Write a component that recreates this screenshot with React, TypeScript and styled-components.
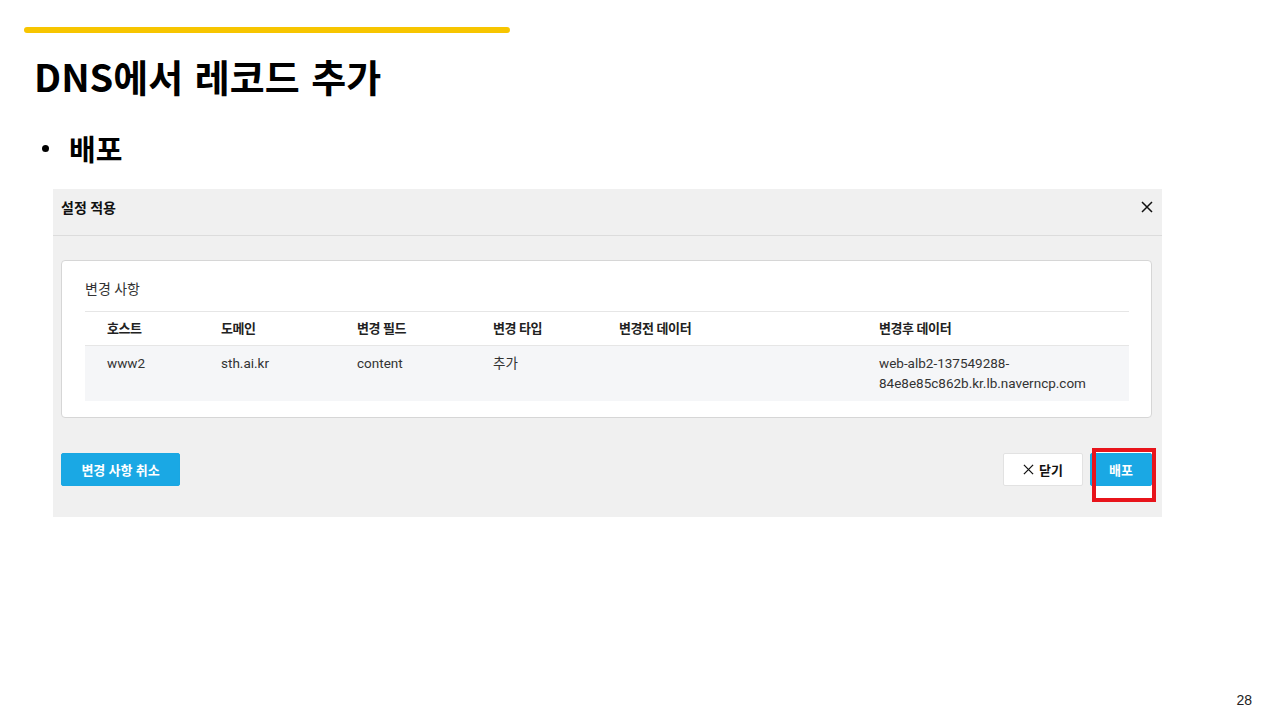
import React from "react";
import styled, { createGlobalStyle } from "styled-components";

const GlobalStyle = createGlobalStyle`
  html, body {
    margin: 0;
    padding: 0;
    background: #ffffff;
  }
`;

const Slide = styled.div`
  width: 1280px;
  height: 720px;
  box-sizing: border-box;
  display: flex;
  flex-direction: column;
  padding: 27px 0 0 0;
  background: #ffffff;
  font-family: "Noto Sans CJK KR", "Noto Sans", sans-serif;
  color: #000;
  overflow: hidden;
`;

const AccentBar = styled.div`
  width: 486px;
  height: 6px;
  margin-left: 24px;
  border-radius: 3px;
  background: #f7c500;
`;

const Title = styled.h1`
  margin: 18px 0 0 34px;
  font-size: 38px;
  line-height: 50px;
  font-weight: 700;
  word-spacing: 3px;
`;

const Bullet = styled.div`
  display: flex;
  align-items: center;
  gap: 20px;
  margin: 27px 0 0 42px;
  font-size: 29px;
  line-height: 40px;
  font-weight: 700;

  &::before {
    content: "";
    width: 7px;
    height: 7px;
    border-radius: 50%;
    background: #000;
  }
`;

const Dialog = styled.section`
  width: 1109px;
  margin: 21px 0 0 53px;
  background: #f0f0f0;
  font-family: Roboto, "Noto Sans CJK KR", sans-serif;
  color: #222;
`;

const DialogHeader = styled.header`
  height: 47px;
  box-sizing: border-box;
  display: flex;
  align-items: center;
  justify-content: space-between;
  padding: 0 9px 10px 8px;
  border-bottom: 1px solid #dcdcdc;
`;

const DialogTitle = styled.h2`
  margin: 0;
  font-size: 14px;
  font-weight: 700;
  color: #111;
`;

const CloseIcon = styled.svg`
  width: 12px;
  height: 12px;
  display: block;
`;

const DialogBody = styled.div`
  padding: 24px 10px 0 8px;
`;

const Card = styled.div`
  background: #ffffff;
  border: 1px solid #d6d6d6;
  border-radius: 4px;
  padding: 15px 22px 16px 23px;
`;

const CardTitle = styled.div`
  font-size: 14px;
  line-height: 26px;
  color: #333;
  margin-bottom: 9px;
`;

const Table = styled.div`
  display: grid;
  grid-template-columns: 114px 136px 136px 126px 260px 1fr;
  border-top: 1px solid #e6e6e6;
`;

const HeadCell = styled.div`
  height: 34px;
  box-sizing: border-box;
  display: flex;
  align-items: center;
  padding: 0 0 3px 22px;
  font-size: 13px;
  font-weight: 700;
  letter-spacing: -0.4px;
  color: #222;
  border-bottom: 1px solid #e6e6e6;
`;

const Cell = styled.div`
  min-height: 55px;
  box-sizing: border-box;
  padding: 7px 0 0 22px;
  font-size: 13.5px;
  line-height: 20px;
  color: #333;
  background: #f5f6f8;
`;

const DialogFooter = styled.footer`
  display: flex;
  justify-content: space-between;
  align-items: flex-start;
  padding: 35px 10px 31px 8px;
`;

const Actions = styled.div`
  display: flex;
  gap: 7px;
`;

const Button = styled.button<{ $variant?: "primary" | "plain" }>`
  height: 33px;
  box-sizing: border-box;
  display: inline-flex;
  align-items: center;
  justify-content: center;
  gap: 5px;
  padding: 0 17px;
  border-radius: 2px;
  font-family: Roboto, "Noto Sans CJK KR", sans-serif;
  font-size: 13px;
  font-weight: 700;
  cursor: pointer;
  border: 1px solid ${(p) => (p.$variant === "plain" ? "#e2e2e2" : "#1aa7e2")};
  background: ${(p) => (p.$variant === "plain" ? "#ffffff" : "#1aa8e4")};
  color: ${(p) => (p.$variant === "plain" ? "#111" : "#ffffff")};
`;

const Highlight = styled.div`
  position: relative;
  width: 62px;
`;

const HighlightFill = styled.span`
  position: absolute;
  left: 2px;
  top: -5px;
  width: 64px;
  height: 54px;
  background: #ffffff;
`;

const HighlightFrame = styled.span`
  position: absolute;
  left: 2px;
  top: -5px;
  width: 64px;
  height: 54px;
  box-sizing: border-box;
  border: 4px solid #e8141b;
  pointer-events: none;
`;

const DeployButton = styled(Button)`
  position: relative;
  width: 62px;
  padding: 0;
`;

const PageNumber = styled.div`
  margin: auto 28px 12px auto;
  font-family: "Liberation Sans", Arial, sans-serif;
  font-size: 14px;
  color: #222;
`;

const headers = ["호스트", "도메인", "변경 필드", "변경 타입", "변경전 데이터", "변경후 데이터"];

const rows = [
  {
    host: "www2",
    domain: "sth.ai.kr",
    field: "content",
    type: "추가",
    before: "",
    after: ["web-alb2-137549288-", "84e8e85c862b.kr.lb.naverncp.com"],
  },
];

const App: React.FC = () => {
  return (
    <>
      <GlobalStyle />
      <Slide>
        <AccentBar />
        <Title>DNS에서 레코드 추가</Title>
        <Bullet>배포</Bullet>

        <Dialog>
          <DialogHeader>
            <DialogTitle>설정 적용</DialogTitle>
            <CloseIcon viewBox="0 0 12 12">
              <path d="M1 1 L11 11 M11 1 L1 11" stroke="#111" strokeWidth="1.5" />
            </CloseIcon>
          </DialogHeader>

          <DialogBody>
            <Card>
              <CardTitle>변경 사항</CardTitle>
              <Table>
                {headers.map((h) => (
                  <HeadCell key={h}>{h}</HeadCell>
                ))}
                {rows.map((r) => (
                  <React.Fragment key={r.host}>
                    <Cell>{r.host}</Cell>
                    <Cell>{r.domain}</Cell>
                    <Cell>{r.field}</Cell>
                    <Cell>{r.type}</Cell>
                    <Cell>{r.before}</Cell>
                    <Cell>
                      {r.after.map((line) => (
                        <div key={line}>{line}</div>
                      ))}
                    </Cell>
                  </React.Fragment>
                ))}
              </Table>
            </Card>
          </DialogBody>

          <DialogFooter>
            <Button style={{ width: 119 }}>변경 사항 취소</Button>
            <Actions>
              <Button $variant="plain" style={{ width: 80 }}>
                <svg width="11" height="11" viewBox="0 0 12 12">
                  <path d="M1 1 L11 11 M11 1 L1 11" stroke="#111" strokeWidth="1.4" />
                </svg>
                닫기
              </Button>
              <Highlight>
                <HighlightFill />
                <DeployButton>배포</DeployButton>
                <HighlightFrame />
              </Highlight>
            </Actions>
          </DialogFooter>
        </Dialog>

        <PageNumber>28</PageNumber>
      </Slide>
    </>
  );
};

export default App;
